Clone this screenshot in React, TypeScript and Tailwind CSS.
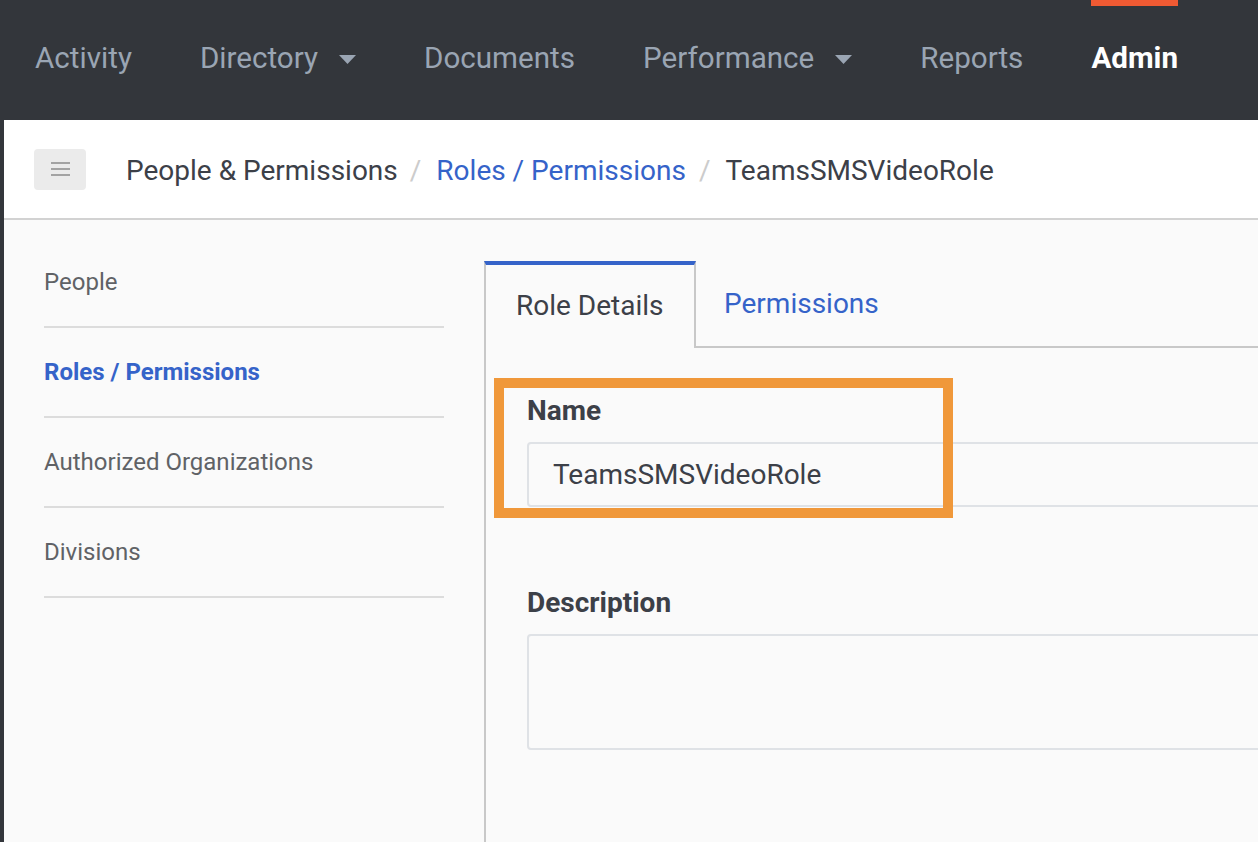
const navItems = [
  { label: "Activity", caret: false },
  { label: "Directory", caret: true },
  { label: "Documents", caret: false },
  { label: "Performance", caret: true },
  { label: "Reports", caret: false },
];

const sideItems = [
  { label: "People", active: false },
  { label: "Roles / Permissions", active: true },
  { label: "Authorized Organizations", active: false },
  { label: "Divisions", active: false },
];

function Caret() {
  return (
    <svg width="17" height="9" viewBox="0 0 17 9" className="ml-[21px] mt-[3px]">
      <path d="M0 0 H17 L8.5 9 Z" fill="#9aa5b3" />
    </svg>
  );
}

export default function App() {
  return (
    <div
      className="flex h-[842px] w-[1258px] flex-col overflow-hidden bg-[#33363b]"
      style={{ fontFamily: "Roboto, 'Liberation Sans', sans-serif" }}
    >
      {/* Top nav */}
      <nav className="flex h-[120px] shrink-0 items-stretch gap-[68px] pl-[35px]">
        {navItems.map((item) => (
          <div key={item.label} className="flex items-center pb-[4px] text-[29.6px] text-[#9aa5b3]">
            <span>{item.label}</span>
            {item.caret && <Caret />}
          </div>
        ))}
        <div className="relative flex items-center pb-[4px] text-[29.6px] font-bold text-white">
          <div className="absolute top-0 right-0 left-0 h-[6px] bg-[#f05a33]" />
          <span>Admin</span>
        </div>
      </nav>

      {/* Page */}
      <div className="flex min-h-0 flex-1 flex-col pl-[4px]">
        {/* Breadcrumb bar */}
        <div className="flex h-[100px] shrink-0 items-center border-b-2 border-[#d2d2d2] bg-white pl-[30px]">
          <button className="flex h-[41px] w-[52px] flex-col items-center justify-center gap-[4px] rounded-[4px] bg-[#ebebeb]">
            <span className="h-[2px] w-[19px] bg-[#a3a3a3]" />
            <span className="h-[2px] w-[19px] bg-[#a3a3a3]" />
            <span className="h-[2px] w-[19px] bg-[#a3a3a3]" />
          </button>
          <div className="ml-[40px] flex items-center pt-[3px] text-[28px] text-[#3c4048]">
            <span>People &amp; Permissions</span>
            <span className="mr-[15px] ml-[12px] text-[#cccccc]">/</span>
            <span className="text-[#3563c9]">Roles / Permissions</span>
            <span className="mr-[15px] ml-[13px] text-[#cccccc]">/</span>
            <span>TeamsSMSVideoRole</span>
          </div>
        </div>

        {/* Content */}
        <div className="flex min-h-0 flex-1 bg-[#fafafa]">
          {/* Sidebar */}
          <aside className="ml-[40px] w-[400px] shrink-0 pt-[18px]">
            {sideItems.map((item) => (
              <div
                key={item.label}
                className={`flex h-[90px] items-center border-b-2 border-[#dcdcdc] text-[24px] ${
                  item.active ? "font-bold text-[#3563c9]" : "text-[#606266]"
                }`}
              >
                {item.label}
              </div>
            ))}
          </aside>

          {/* Main panel */}
          <section className="ml-[40px] flex min-w-0 flex-1 flex-col pt-[41px]">
            <div className="flex h-[87px] shrink-0">
              <div className="flex w-[212px] items-center border-x-2 border-t-4 border-x-[#c8c8c8] border-t-[#3563c9] bg-[#fafafa] pb-[2px] pl-[30px] text-[28px] text-[#3c4048]">
                Role Details
              </div>
              <div className="flex flex-1 items-center border-b-2 border-[#c8c8c8] pl-[28px] text-[28px] text-[#3563c9]">
                Permissions
              </div>
            </div>

            <div className="relative flex-1 border-l-2 border-[#c8c8c8] pt-[47px] pl-[41px]">
              {/* highlight box */}
              <div className="absolute top-[30px] left-[8px] h-[140px] w-[459px] border-[10px] border-[#f0983a]" />

              <label className="block h-[32px] text-[28px] leading-[32px] font-bold text-[#3c4048]">
                Name
              </label>
              <div className="mt-[15px] flex h-[65px] w-[900px] items-center rounded-[4px] border-2 border-[#dfe2e6] bg-[#fafafa] pl-[24px] text-[28px] text-[#3c4048]">
                TeamsSMSVideoRole
              </div>

              <label className="mt-[80px] block h-[32px] text-[28px] leading-[32px] font-bold text-[#3c4048]">
                Description
              </label>
              <div className="mt-[15px] h-[116px] w-[900px] rounded-[4px] border-2 border-[#dfe2e6] bg-[#fafafa]" />
            </div>
          </section>
        </div>
      </div>
    </div>
  );
}
